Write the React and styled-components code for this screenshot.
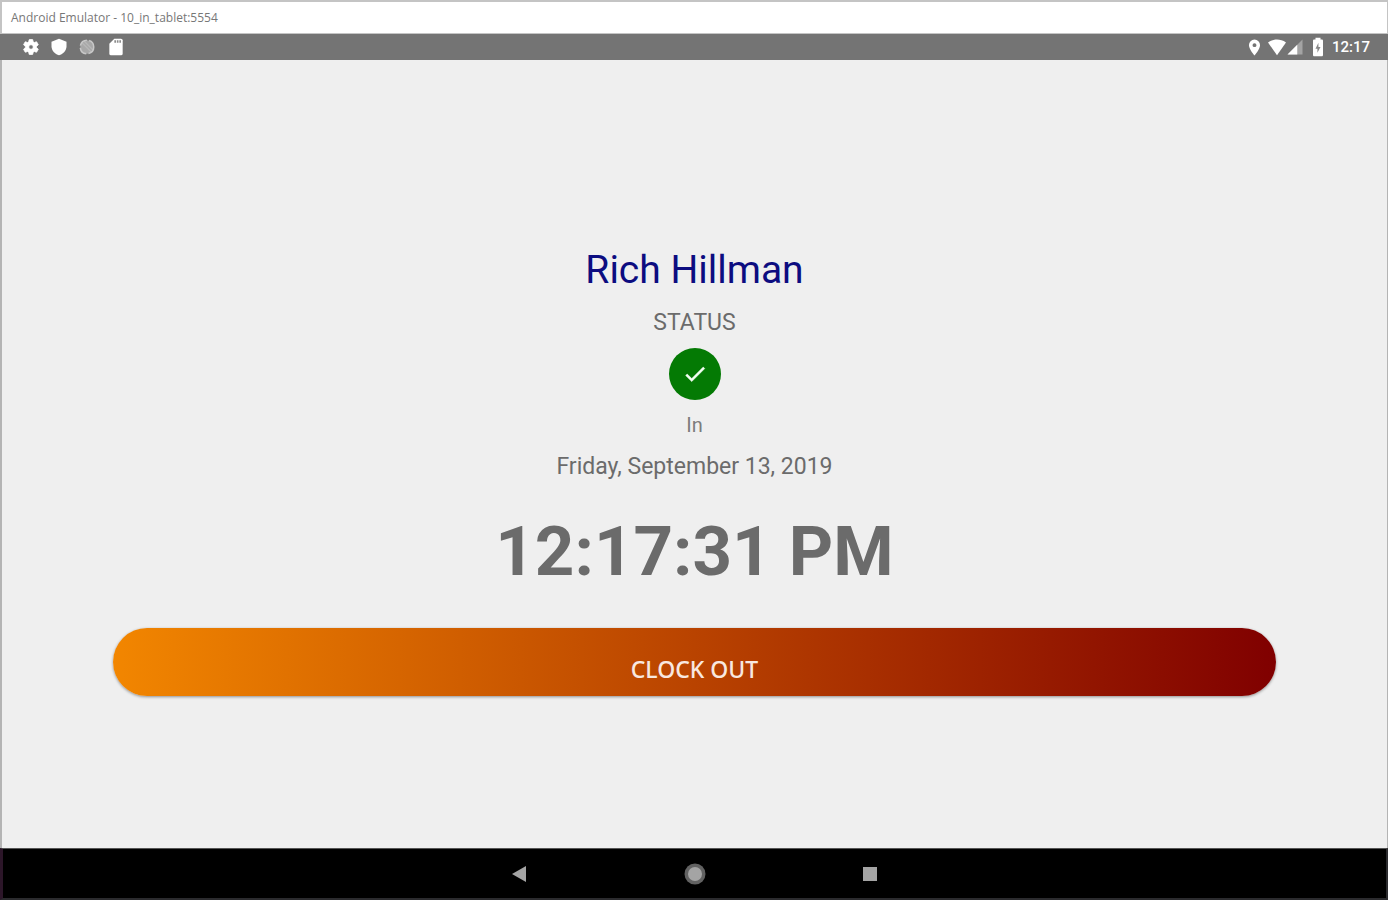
import styled, { createGlobalStyle } from "styled-components";

const GlobalStyle = createGlobalStyle`
  * {
    box-sizing: border-box;
  }

  body {
    margin: 0;
    font-family: Roboto, "Liberation Sans", sans-serif;
    color: #6b6b6b;
  }
`;

const Window = styled.div`
  display: flex;
  flex-direction: column;
  min-height: 100vh;
  background: #efefef;
`;

const TitleBar = styled.header`
  height: 34px;
  padding-left: 9px;
  border: 2px solid #c4c4c4;
  border-width: 2px 1px 1px 2px;
  background: #fff;
  color: #777;
  font-family: "Open Sans", sans-serif;
  font-size: 12px;
  line-height: 31px;
`;

const StatusBar = styled.div`
  display: flex;
  align-items: center;
  justify-content: space-between;
  height: 26px;
  padding: 0 18px 0 22px;
  background: #747474;
  color: #fff;
`;

const IconGroup = styled.div`
  display: flex;
  align-items: center;
  gap: ${({ $gap }) => $gap}px;
`;

const Clock = styled.time`
  font-size: 15px;
  font-weight: 500;
  line-height: 26px;
`;

const Screen = styled.main`
  flex: 1;
  display: flex;
  flex-direction: column;
  align-items: center;
  justify-content: center;
  padding: 34px 8% 0;
  border: 1px solid #b4b4b4;
  border-width: 0 1px 0 2px;
`;

const Name = styled.h1`
  margin: 0;
  color: #0c0c80;
  font-size: 39px;
  font-weight: 400;
  line-height: 48px;
`;

const Text = styled.p`
  margin: 0;
  color: ${({ $small }) => ($small ? "#7c7c7c" : "#6b6b6b")};
  font-size: ${({ $small }) => ($small ? 20 : 23)}px;
  line-height: ${({ $small }) => ($small ? 24 : 32)}px;
`;

const Badge = styled.div`
  display: flex;
  align-items: center;
  justify-content: center;
  width: 52px;
  height: 52px;
  margin: 9px 0 13px;
  border-radius: 50%;
  background: #047a04;
`;

const StatusBlock = styled.section`
  display: flex;
  flex-direction: column;
  align-items: center;
  padding: 13px 0 14px;
`;

const BigTime = styled.time`
  margin: 29px 0 36px;
  font-size: 69px;
  font-weight: 700;
  line-height: 80px;
`;

const ClockButton = styled.button`
  width: 100%;
  height: 68px;
  padding: 14px 0 0;
  border: none;
  border-radius: 34px;
  background: linear-gradient(90deg, #f28600, #800000);
  box-shadow: 0 1px 3px rgba(0, 0, 0, 0.4);
  color: #f8e8e0;
  font-family: "Noto Sans", sans-serif;
  font-size: 23px;
  font-weight: 500;
  cursor: pointer;
`;

const NavBar = styled.nav`
  display: flex;
  align-items: center;
  justify-content: center;
  gap: 151px;
  height: 52px;
  border: 2px solid #2b2b2e;
  border-left: 3px solid #2c1629;
  border-top-color: #555;
  border-top-width: 1px;
  background: #000;
`;

const NavButton = styled.button`
  display: flex;
  width: 24px;
  height: 24px;
  padding: 0;
  border: none;
  background: none;
  cursor: pointer;
`;

function Icon({ size = 18, children }) {
    return (
        <svg width={size} height={size} viewBox="0 0 24 24" fill="currentColor" aria-hidden="true">
            {children}
        </svg>
    );
}

export default function App() {
    return (
        <>
            <GlobalStyle />
            <Window>
                <TitleBar>Android Emulator - 10_in_tablet:5554</TitleBar>
                <StatusBar>
                    <IconGroup $gap={10}>
                        <Icon>
                            <path d="M19.4 13c.1-.3.1-.7.1-1s0-.7-.1-1l2.1-1.700c.2-.1.3-.4.1-.6l-2-3.500c-.1-.2-.4-.3-.6-.2l-2.500 1c-.5-.4-1.100-.7-1.700-1l-.4-2.600c0-.2-.2-.4-.5-.4h-4c-.2 0-.4.2-.5.4L9 5c-.6.3-1.200.6-1.700 1l-2.500-1c-.2-.1-.5 0-.6.2l-2 3.500c-.1.2-.1.5.1.6L4.500 11c0 .3-.1.7-.1 1s0 .7.1 1l-2.200 1.700c-.2.1-.2.4-.1.6l2 3.500c.1.2.4.3.6.2l2.500-1c.5.4 1.100.7 1.700 1l.4 2.600c0 .2.2.4.5.4h4c.2 0 .5-.2.5-.4l.4-2.600c.6-.3 1.200-.6 1.700-1l2.500 1c.2.1.5 0 .6-.2l2-3.500c.1-.2.1-.5-.1-.6L19.400 13zM12 15a3 3 0 1 1 0-6 3 3 0 0 1 0 6z" stroke="currentColor" />
                        </Icon>
                        <Icon>
                            <path d="M12 1 2 5v6c0 5.500 4.500 10.700 10 12 5.500-1.300 10-6.500 10-12V5l-10-4z" />
                        </Icon>
                        <Icon>
                            <circle cx="12" cy="12" r="9" fill="#a8a8a8" />
                            <path d="M5 6 18 19M8 4l12 12" stroke="#b8b8b8" strokeWidth="1.5" />
                            <circle cx="12" cy="12" r="9" fill="none" stroke="#c8c8c8" strokeWidth="2" strokeDasharray="12 3" />
                        </Icon>
                        <Icon size={20}>
                            <path d="M18 2h-8L4 8v12a2 2 0 0 0 2 2h12a2 2 0 0 0 2-2V4a2 2 0 0 0-2-2z" />
                            <path d="M10 4h2v3h-2zM13 4h2v3h-2zM16 4h2v3h-2z" fill="#8c8c8c" />
                        </Icon>
                    </IconGroup>
                    <IconGroup $gap={4}>
                        <Icon size={19}>
                            <path d="M12 2a7 7 0 0 0-7 7c0 5.200 7 13 7 13s7-7.800 7-13a7 7 0 0 0-7-7zm0 9.500a2.500 2.500 0 1 1 0-5 2.500 2.500 0 0 1 0 5z" />
                        </Icon>
                        <IconGroup $gap={0}>
                            <Icon>
                                <path d="M12 23 24 6C20 3 16 2 12 2S4 3 0 6l12 17z" />
                            </Icon>
                            <Icon>
                                <path d="M2 22h20V2z" opacity="0.35" />
                                <path d="M2 22h13V9z" />
                            </Icon>
                        </IconGroup>
                        <Icon size={20}>
                            <path d="M16.500 3H15V1H9v2H7.500C6.700 3 6 3.700 6 4.500v17c0 .8.700 1.500 1.500 1.500h9c.8 0 1.500-.7 1.500-1.500v-17c0-.8-.7-1.500-1.500-1.500z" />
                            <path d="M12.500 7 9 14h2.300v5L15 12h-2.500z" fill="#888" />
                        </Icon>
                        <Clock>12:17</Clock>
                    </IconGroup>
                </StatusBar>
                <Screen>
                    <Name>Rich Hillman</Name>
                    <StatusBlock>
                        <Text>STATUS</Text>
                        <Badge>
                            <Icon size={26}>
                                <path d="M9 16.200 4.800 12l-1.400 1.400L9 19 21 7l-1.400-1.400z" fill="#f4fff4" stroke="#f4fff4" strokeWidth="0.5" />
                            </Icon>
                        </Badge>
                        <Text $small>In</Text>
                    </StatusBlock>
                    <Text>Friday, September 13, 2019</Text>
                    <BigTime>12:17:31 PM</BigTime>
                    <ClockButton type="button">CLOCK OUT</ClockButton>
                </Screen>
                <NavBar>
                    <NavButton type="button" aria-label="Back">
                        <Icon size={24}>
                            <path d="M4 12 18 4v16z" fill="#a4a4a4" />
                        </Icon>
                    </NavButton>
                    <NavButton type="button" aria-label="Home">
                        <Icon size={24}>
                            <circle cx="12" cy="12" r="10.5" fill="#626262" />
                            <circle cx="12" cy="12" r="7" fill="#a4a4a4" />
                        </Icon>
                    </NavButton>
                    <NavButton type="button" aria-label="Recent apps">
                        <Icon size={24}>
                            <path d="M5 5h14v14H5z" fill="#a4a4a4" />
                        </Icon>
                    </NavButton>
                </NavBar>
            </Window>
        </>
    );
}
